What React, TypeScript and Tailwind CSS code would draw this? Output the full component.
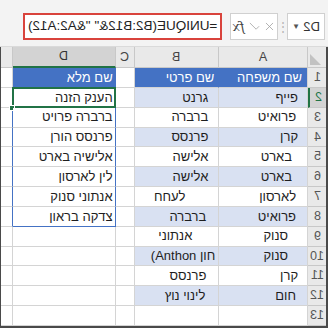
import { Check, X } from 'lucide-react';

type Row = {
  n: string;
  a: string;
  b: React.ReactNode;
  d?: string;
  aPad: string;
  bPad: string;
};

const rows: Row[] = [
  { n: '1', a: 'שם משפחה', b: 'שם פרטי', d: 'שם מלא', aPad: 'pr-[5px]', bPad: 'pr-[4px]' },
  { n: '2', a: 'פייף', b: 'גרנט', d: 'הענק הזנה', aPad: 'pr-[9px]', bPad: 'pr-[10px]' },
  { n: '3', a: 'פרואיט', b: 'ברברה', d: 'ברברה פרויט', aPad: 'pr-[11px]', bPad: 'pr-[10px]' },
  { n: '4', a: 'קרן', b: 'פרנסס', d: 'פרנסס הורן', aPad: 'pr-[9px]', bPad: 'pr-[10px]' },
  { n: '5', a: 'בארט', b: 'אלישה', d: 'אלישיה בארט', aPad: 'pr-[15px]', bPad: 'pr-[10px]' },
  { n: '6', a: 'בארט', b: 'אלישה', d: 'לין לארסון', aPad: 'pr-[15px]', bPad: 'pr-[10px]' },
  { n: '7', a: 'לארסון', b: 'לעחח', d: 'אנתוני סנוק', aPad: 'pr-[11px]', bPad: 'pr-[33px]' },
  { n: '8', a: 'פרואיט', b: 'ברברה', d: 'צדקה בראון', aPad: 'pr-[11px]', bPad: 'pr-[12px]' },
  { n: '9', a: 'סנוק', b: 'אנתוני', aPad: 'pr-[19px]', bPad: 'pr-[26px]' },
  {
    n: '10',
    a: 'סנוק',
    b: (
      <span className="flex">
        <span dir="ltr">(Anthon</span>
        <span>&nbsp;חון</span>
      </span>
    ),
    aPad: 'pr-[19px]',
    bPad: 'pr-[3px]',
  },
  { n: '11', a: 'קרן', b: 'פרנסס', aPad: 'pr-[9px]', bPad: 'pr-[12px]' },
  { n: '12', a: 'חום', b: 'לינוי נוץ', aPad: 'pr-[11px]', bPad: 'pr-[13px]' },
  { n: '13', a: '', b: '', aPad: 'pr-[9px]', bPad: 'pr-[10px]' },
];

// mirrored glyphs, the screenshot is flipped
const Flip = ({ children }: { children: React.ReactNode }) => (
  <span className="inline-block [transform:scaleX(-1)]">{children}</span>
);

function FormulaBar() {
  return (
    <div className="h-[47px] shrink-0 bg-[#f3f3f3] flex items-start pt-[13px] pl-[23px] border-b border-[#dadada]">
      <div className="w-[199px] h-[27px] bg-white border-2 border-[#d9433c] flex items-center justify-end pr-[3px]">
        <span className="inline-block [transform:scaleX(-1)] text-[13.5px] text-[#222] whitespace-pre">=UNIQUE(B2:B12&amp;" "&amp;A2:A12)</span>
      </div>
      <div className="ml-[8px] w-[48px] h-[27px] bg-white border border-[#d0d0d0] flex items-center justify-center gap-[2px] [transform:scaleX(-1)]">
        <X size={13} strokeWidth={1.4} className="text-[#9c9c9c]" />
        <Check size={13} strokeWidth={1.4} className="text-[#9c9c9c]" />
        <span className="font-['DejaVu_Serif',serif] italic text-[13px] text-[#444] ml-[1px]">fx</span>
      </div>
      <div className="w-[9px] h-[27px] flex items-center justify-center text-[#b4b4b4] text-[12px]">⋮</div>
      <div className="w-[38px] h-[27px] bg-white border border-[#d0d0d0] flex items-center justify-between px-[4px] [transform:scaleX(-1)]">
        <span className="text-[13px] text-[#333]">D2</span>
        <span className="text-[8px] text-[#555]">▼</span>
      </div>
    </div>
  );
}

function HeaderRow() {
  return (
    <div className="h-[21px] shrink-0 flex text-[12.5px] text-[#444]">
      <div className="w-[12px] bg-[#e9e9e9] border-r border-b border-[#c8c8c8]" />
      <div className="w-[103px] bg-[#d3d3d3] border-r border-[#c8c8c8] border-b-2 border-b-[#217346] flex items-center justify-center text-[#333]">
        <Flip>D</Flip>
      </div>
      <div className="w-[19px] bg-[#e9e9e9] border-r border-b border-[#c8c8c8] flex items-center justify-center">
        <Flip>C</Flip>
      </div>
      <div className="w-[85px] bg-[#e9e9e9] border-r border-b border-[#c8c8c8] flex items-center justify-center">
        <Flip>B</Flip>
      </div>
      <div className="w-[89px] bg-[#e9e9e9] border-r border-b border-[#c8c8c8] flex items-center justify-center">
        <Flip>A</Flip>
      </div>
      <div className="w-[18px] bg-[#e9e9e9] border-b border-[#c8c8c8] flex items-end justify-start p-[2px]">
        <svg width="11" height="11" viewBox="0 0 11 11">
          <polygon points="0,0 0,11 11,11" fill="#c2c2c2" />
        </svg>
      </div>
    </div>
  );
}

function GridRow({ row, i }: { row: Row; i: number }) {
  const header = i === 0;
  const band = i > 0 && i < 12 && i % 2 === 1;
  const inSpill = i < 8;
  const tableBg = header ? 'bg-[#4472c4] text-white' : band ? 'bg-[#d9e1f2]' : 'bg-white';
  const selected = i === 1;

  return (
    <div className="flex-1 flex min-h-0 text-[13px] text-[#1e1e1e]">
      <div className={`w-[12px] bg-white border-b border-[#d4d4d4] border-r ${inSpill && !header ? 'border-r-[#4472c4]' : 'border-r-[#d4d4d4]'}`} />
      <div
        className={`relative w-[103px] flex items-center justify-end pr-[2px] border-r ${inSpill ? 'border-r-[#4472c4]' : 'border-r-[#d4d4d4]'} border-b ${i === 7 ? 'border-b-[#4472c4]' : 'border-b-[#d4d4d4]'} ${header ? 'bg-[#4472c4] text-white' : 'bg-white'}`}
      >
        <span>{row.d}</span>
        {selected && (
          <>
            <div className="absolute -top-[1px] -left-[1px] -right-[1px] -bottom-[1px] border-2 border-[#217346]" />
            <div className="absolute -bottom-[4px] -left-[4px] w-[6px] h-[6px] bg-[#217346] border border-white" />
          </>
        )}
      </div>
      <div className="w-[19px] bg-white border-r border-b border-[#d4d4d4]" />
      <div className={`w-[85px] flex items-center justify-end overflow-hidden border-b border-[#d4d4d4] border-r ${header ? 'border-r-[#4472c4]' : 'border-r-[#d4d4d4]'} ${tableBg} ${row.bPad}`}>
        <span className="whitespace-nowrap">{row.b}</span>
      </div>
      <div className={`w-[89px] flex items-center justify-end border-r border-b border-[#d4d4d4] ${tableBg} ${row.aPad}`}>
        <span className="whitespace-nowrap">{row.a}</span>
      </div>
      <div
        className={`w-[18px] flex items-center justify-center border-b border-[#c8c8c8] text-[12.5px] ${selected ? 'bg-[#d3d3d3] text-[#217346] border-l-2 border-l-[#217346]' : 'bg-[#e9e9e9] text-[#555]'}`}
      >
        <Flip>{row.n}</Flip>
      </div>
    </div>
  );
}

export default function App() {
  return (
    <div className="w-[328px] h-[328px] overflow-hidden bg-white flex flex-col font-['Liberation_Sans',Arial,sans-serif]">
      <FormulaBar />
      <div className="flex-1 min-h-0 flex flex-col border-l border-r-2 border-b-2 border-[#4a4a4a]">
        <HeaderRow />
        <div className="flex-1 min-h-0 flex flex-col">
          {rows.map((row, i) => (
            <GridRow key={row.n} row={row} i={i} />
          ))}
        </div>
      </div>
    </div>
  );
}
